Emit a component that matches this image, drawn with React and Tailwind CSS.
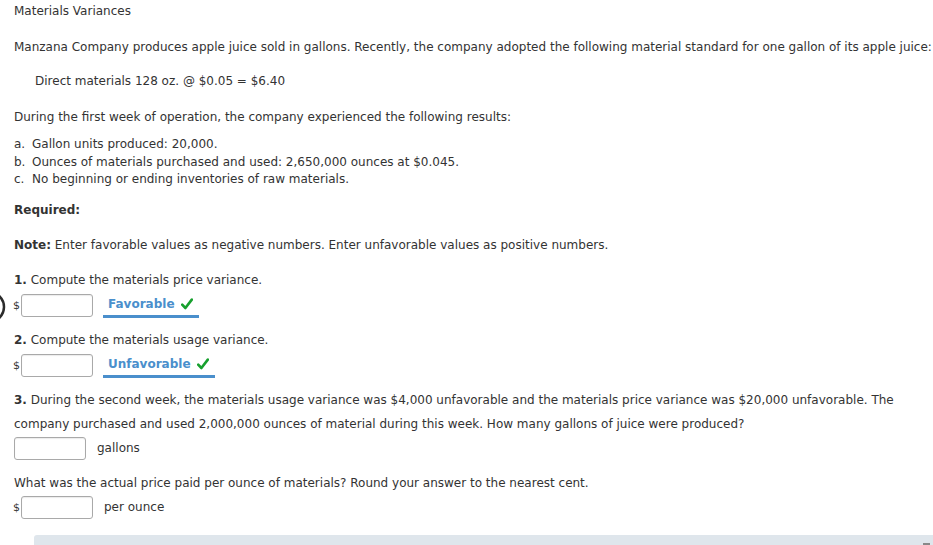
const results = [
  { mark: "a.", text: "Gallon units produced: 20,000." },
  { mark: "b.", text: "Ounces of materials purchased and used: 2,650,000 ounces at $0.045." },
  { mark: "c.", text: "No beginning or ending inventories of raw materials." },
];

function AnswerBox({ dollar }) {
  return (
    <div className="flex items-center">
      {dollar && <span className="w-[8px] text-[11px] leading-none">$</span>}
      <div className="w-[72px] h-[23px] rounded-[3px] border border-[#a9a9a9] bg-white shadow-[inset_0_1px_1px_rgba(0,0,0,0.08)]" />
    </div>
  );
}

function CheckMark() {
  return (
    <svg className="ml-[6px]" width="12" height="12" viewBox="0 0 12 12">
      <path d="M1.2 6.6 L4.4 10 L10.8 1.6" fill="none" stroke="#17a02e" strokeWidth="2.6" strokeLinecap="round" strokeLinejoin="round" />
    </svg>
  );
}

function PickedAnswer({ label, width }) {
  return (
    <div className={`ml-[10px] h-[24px] flex items-center pl-[5px] border-b-[3px] border-[#4a8fcc] ${width}`}>
      <span className="font-bold text-[#4a8fcc]">{label}</span>
      <CheckMark />
    </div>
  );
}

export default function App() {
  return (
    <div className="relative w-[933px] h-[545px] overflow-hidden bg-white text-[12px] text-[#333] font-['DejaVu_Sans','Verdana',sans-serif]">
      <div className="pl-[14px]">
        <p className="pt-[3px] leading-[17px]">Materials Variances</p>
        <p className="mt-[19px] leading-[17px] whitespace-nowrap">
          Manzana Company produces apple juice sold in gallons. Recently, the company adopted the following material standard for one gallon of its apple juice:
        </p>
        <p className="mt-[17px] pl-[21px] leading-[17px]">Direct materials 128 oz. @ $0.05 = $6.40</p>
        <p className="mt-[19px] leading-[17px]">During the first week of operation, the company experienced the following results:</p>
        <ul className="mt-[10px]">
          {results.map((r) => (
            <li key={r.mark} className="flex leading-[17.5px]">
              <span className="w-[18px]">{r.mark}</span>
              <span>{r.text}</span>
            </li>
          ))}
        </ul>
        <p className="mt-[13px] font-bold leading-[17px]">Required:</p>
        <p className="mt-[18px] leading-[17px]">
          <b>Note:</b> Enter favorable values as negative numbers. Enter unfavorable values as positive numbers.
        </p>

        <p className="mt-[18px] leading-[17px]">
          <b>1.</b> Compute the materials price variance.
        </p>
        <div className="relative flex items-center mt-[5px] -ml-[1px]">
          <svg className="absolute -left-[13px] -top-[3px]" width="8" height="32" viewBox="0 0 8 32">
            <circle cx="-11" cy="16" r="15" fill="none" stroke="#2b2b2b" strokeWidth="2.5" />
          </svg>
          <AnswerBox dollar />
          <PickedAnswer label="Favorable" width="w-[96px]" />
        </div>

        <p className="mt-[14px] leading-[17px]">
          <b>2.</b> Compute the materials usage variance.
        </p>
        <div className="flex items-center mt-[5px] -ml-[1px]">
          <AnswerBox dollar />
          <PickedAnswer label="Unfavorable" width="w-[112px]" />
        </div>

        <p className="mt-[10px] leading-[24px] max-w-[895px]">
          <b>3.</b> During the second week, the materials usage variance was $4,000 unfavorable and the materials price variance was $20,000 unfavorable. The company purchased and used 2,000,000 ounces of material during this week. How many gallons of juice were produced?
        </p>
        <div className="flex items-center mt-[1px]">
          <AnswerBox />
          <span className="ml-[11px]">gallons</span>
        </div>

        <p className="mt-[15px] leading-[17px]">What was the actual price paid per ounce of materials? Round your answer to the nearest cent.</p>
        <div className="flex items-center mt-[4px] -ml-[1px]">
          <AnswerBox dollar />
          <span className="ml-[11px]">per ounce</span>
        </div>
      </div>

      <div className="absolute left-[34px] right-0 top-[535px] h-[20px] bg-[#dfe6ec] rounded-tl-[3px]">
        <div className="absolute right-[3px] top-[8px] w-[7px] h-[2px] bg-[#888]" />
      </div>
    </div>
  );
}
